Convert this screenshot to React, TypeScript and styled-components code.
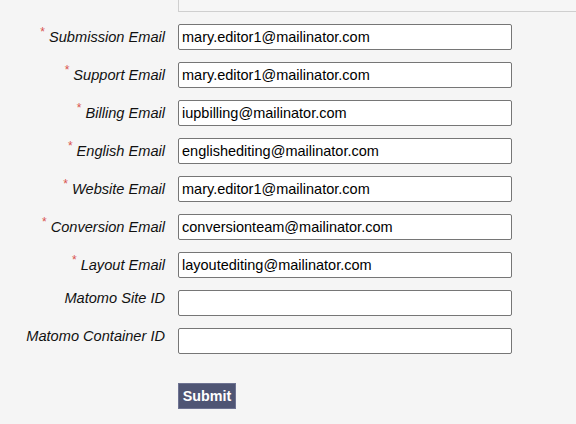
import React from "react";
import styled, { createGlobalStyle } from "styled-components";

const Global = createGlobalStyle`
  html, body { margin: 0; padding: 0; background: #f5f5f5; }
  body { font-family: "Liberation Sans", Arial, sans-serif; }
`;

const Page = styled.div`
  width: 576px;
  height: 424px;
  overflow: hidden;
  background: #f5f5f5;
`;

const TopPanel = styled.div`
  margin-left: 178px;
  height: 11px;
  border-left: 1px solid #cfcfcf;
  border-bottom: 1px solid #cfcfcf;
  background: #f6f6f6;
`;

const Form = styled.form`
  display: grid;
  grid-template-columns: 165px 334px;
  column-gap: 13px;
  row-gap: 12px;
  padding-top: 12px;
  align-items: start;
`;

const Label = styled.label<{ $required?: boolean }>`
  display: block;
  text-align: right;
  font-style: italic;
  font-size: 14.6px;
  line-height: 17px;
  color: #111;
  white-space: nowrap;
  padding-top: ${(p) => (p.$required ? "5px" : "0")};
`;

const Star = styled.span`
  color: #d9534f;
  font-style: normal;
  font-size: 12px;
  position: relative;
  top: -6px;
  margin-right: 4px;
`;

const Input = styled.input`
  box-sizing: border-box;
  width: 334px;
  height: 26px;
  margin: 0;
  padding: 0 3px;
  border: 1px solid #767676;
  border-radius: 2px;
  background: #fff;
  font-family: "Liberation Sans", Arial, sans-serif;
  font-size: 14.5px;
  color: #000;
  outline: none;
`;

const Actions = styled.div`
  grid-column: 2;
  padding-top: 17px;
`;

const SubmitButton = styled.button`
  box-sizing: border-box;
  height: 26px;
  width: 58px;
  padding: 0;
  border: 1px solid #6e7392;
  border-radius: 0;
  background: #4f5574;
  color: #fff;
  font-family: "Liberation Sans", Arial, sans-serif;
  font-weight: bold;
  font-size: 14.3px;
  cursor: pointer;
`;

const fields = [
  { label: "Submission Email", value: "mary.editor1@mailinator.com", required: true },
  { label: "Support Email", value: "mary.editor1@mailinator.com", required: true },
  { label: "Billing Email", value: "iupbilling@mailinator.com", required: true },
  { label: "English Email", value: "englishediting@mailinator.com", required: true },
  { label: "Website Email", value: "mary.editor1@mailinator.com", required: true },
  { label: "Conversion Email", value: "conversionteam@mailinator.com", required: true },
  { label: "Layout Email", value: "layoutediting@mailinator.com", required: true },
  { label: "Matomo Site ID", value: "", required: false },
  { label: "Matomo Container ID", value: "", required: false },
];

export default function App() {
  return (
    <Page>
      <Global />
      <TopPanel />
      <Form onSubmit={(e) => e.preventDefault()}>
        {fields.map((f, i) => (
          <React.Fragment key={i}>
            <Label $required={f.required} htmlFor={`f${i}`}>
              {f.required && <Star>*</Star>}
              {f.label}
            </Label>
            <Input id={`f${i}`} defaultValue={f.value} />
          </React.Fragment>
        ))}
        <Actions>
          <SubmitButton type="submit">Submit</SubmitButton>
        </Actions>
      </Form>
    </Page>
  );
}
